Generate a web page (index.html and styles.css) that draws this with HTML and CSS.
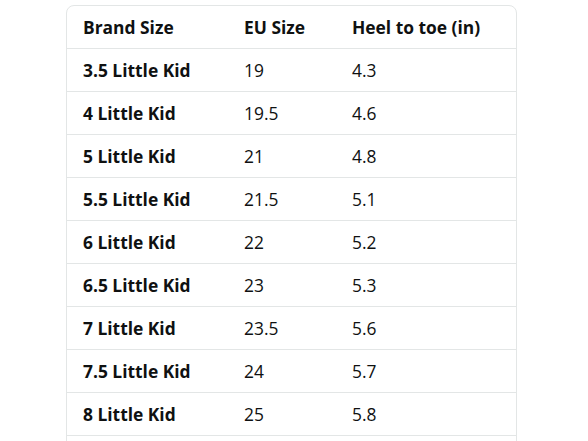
FILE: index.html
```html
<!DOCTYPE html>
<html>
<head>
<meta charset="utf-8">
<link rel="stylesheet" href="styles.css">
</head>
<body>
<div class="page">
  <div class="card">
    <table class="size-table">
      <thead>
        <tr><th>Brand Size</th><th>EU Size</th><th>Heel to toe (in)</th></tr>
      </thead>
      <tbody>
        <tr><th>3.5 Little Kid</th><td>19</td><td>4.3</td></tr>
        <tr><th>4 Little Kid</th><td>19.5</td><td>4.6</td></tr>
        <tr><th>5 Little Kid</th><td>21</td><td>4.8</td></tr>
        <tr><th>5.5 Little Kid</th><td>21.5</td><td>5.1</td></tr>
        <tr><th>6 Little Kid</th><td>22</td><td>5.2</td></tr>
        <tr><th>6.5 Little Kid</th><td>23</td><td>5.3</td></tr>
        <tr><th>7 Little Kid</th><td>23.5</td><td>5.6</td></tr>
        <tr><th>7.5 Little Kid</th><td>24</td><td>5.7</td></tr>
        <tr><th>8 Little Kid</th><td>25</td><td>5.8</td></tr>
        <tr class="spacer"><th></th><td></td><td></td></tr>
      </tbody>
    </table>
  </div>
</div>
</body>
</html>
```

FILE: styles.css
```css
html, body {
  margin: 0;
  padding: 0;
  background: #ffffff;
  overflow: hidden;
}
.page {
  padding: 5px 0 0 66px;
  font-family: "Open Sans", "Noto Sans", Arial, sans-serif;
  color: #0f1111;
}
.card {
  width: 449px;
  border: 1px solid #e3e6e6;
  border-radius: 8px;
  overflow: hidden;
}
.size-table {
  width: 100%;
  border-collapse: separate;
  border-spacing: 0;
  table-layout: fixed;
}
.size-table th,
.size-table td {
  box-sizing: border-box;
  height: 43px;
  padding: 0 0 0 16px;
  text-align: left;
  vertical-align: middle;
  font-size: 17.4px;
  border-bottom: 1px solid #e3e6e6;
  white-space: nowrap;
}
.size-table th {
  font-weight: 700;
}
.size-table td {
  font-weight: 400;
}
.size-table tr > :nth-child(1) { width: 161px; }
.size-table tr > :nth-child(2) { width: 108px; }
.size-table tr.spacer > * { border-bottom: none; }
```
